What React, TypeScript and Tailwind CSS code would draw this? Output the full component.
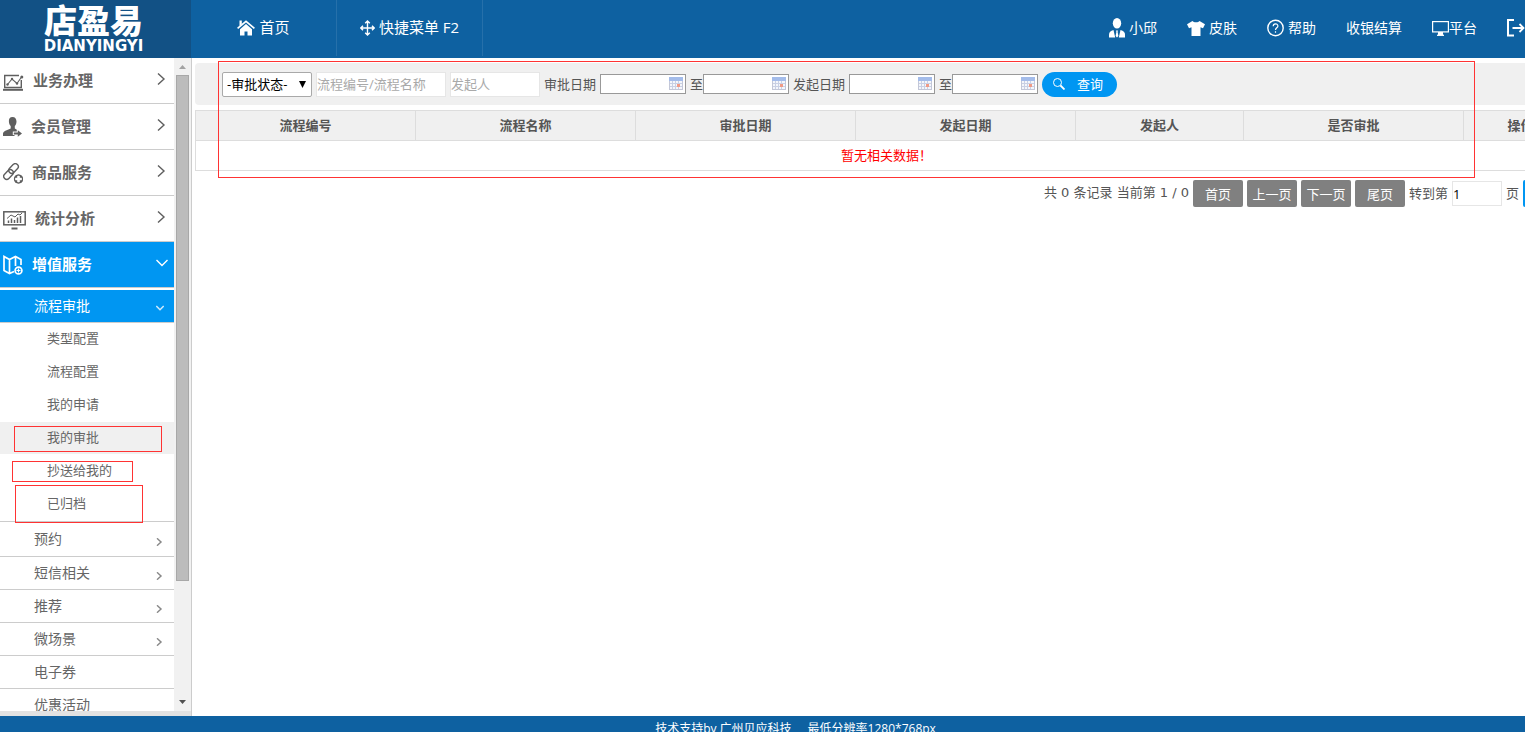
import React from 'react'

const MENUS = [
    { name: '业务办理', icon: <ChartBoardIcon /> },
    { name: '会员管理', icon: <MemberIcon /> },
    { name: '商品服务', icon: <LinkIcon /> },
    { name: '统计分析', icon: <StatsIcon /> },
]

const LEAVES = [
    { name: '类型配置' },
    { name: '流程配置' },
    { name: '我的申请' },
    { name: '我的审批', active: true, mark: 'left-[14px] top-1 w-[148px] h-[26px]' },
    { name: '抄送给我的', mark: 'left-3 top-[6px] w-[121px] h-[21px]' },
    { name: '已归档', mark: 'left-[15px] -top-[3px] w-32 h-[38px]' },
]

const SUB_MENUS = [
    { name: '短信相关', arrow: true },
    { name: '推荐', arrow: true },
    { name: '微场景', arrow: true },
    { name: '电子券', arrow: false },
    { name: '优惠活动', arrow: false },
]

const COLUMNS = [
    { name: '流程编号', width: 'w-[220px]' },
    { name: '流程名称', width: 'w-[220px]' },
    { name: '审批日期', width: 'w-[220px]' },
    { name: '发起日期', width: 'w-[220px]' },
    { name: '发起人', width: 'w-[168px]' },
    { name: '是否审批', width: 'w-[220px]' },
    { name: '操作', width: 'w-[114px]' },
]

function ChartBoardIcon() {
    return (
        <svg className="mt-1" width="21" height="17" viewBox="0 0 21 17" fill="none" stroke="#5f5f5f">
            <path d="M16 1.500H1.700V13.500H18.300V6" strokeWidth="1.400" />
            <path d="M4.500 10.500L9 5l5 4.500 4.500-6.500" strokeWidth="1.100" />
            <path d="M0 15.800h20" strokeWidth="2" />
            <g fill="#5f5f5f" stroke="none">
                <circle cx="4.500" cy="10.500" r="1.200" />
                <circle cx="9" cy="5" r="1.200" />
                <circle cx="14" cy="9.500" r="1.200" />
                <circle cx="18.800" cy="3" r="1.500" />
            </g>
        </svg>
    )
}

function MemberIcon() {
    return (
        <svg className="mt-px" width="19" height="20" viewBox="0 0 19 20" fill="#5f5f5f">
            <path d="M9.500 0C6.800 0 5.700 2 5.900 4.500c.1 2 .8 3.600 1.800 4.500v2.500C5 13 .5 13.500 0 16.500V19h11.500v-1H9.800v-3.500h4v-1.800c-.8-.4-1.500-.8-2-1.200V9c1-.9 1.600-2.500 1.700-4.500C13.400 2 12.200 0 9.500 0z" />
            <path d="M10.800 15.500h4v-2.300l4.200 3.300-4.200 3.300v-2.300h-4z" />
        </svg>
    )
}

function LinkIcon() {
    return (
        <svg className="mt-px" width="20" height="21" viewBox="0 0 20 21" fill="none" stroke="#5f5f5f" strokeWidth="1.400">
            <rect x="-5.500" y="-3" width="11" height="6" rx="3" transform="translate(10.500 5.500) rotate(-45)" />
            <rect x="-5.500" y="-3" width="11" height="6" rx="3" transform="translate(5.500 11.500) rotate(-45)" />
            <circle cx="15.500" cy="16" r="4.600" fill="#5f5f5f" stroke="none" />
            <path d="M15.500 12.500v7M12 16h7" stroke="#fff" strokeWidth="2.600" />
            <circle cx="15.500" cy="16" r="4" strokeWidth="1" />
        </svg>
    )
}

function StatsIcon() {
    return (
        <svg className="mt-1" width="23" height="19" viewBox="0 0 23 19" fill="none" stroke="#5f5f5f">
            <rect x=".8" y=".8" width="21.400" height="13" strokeWidth="1.500" />
            <path d="M4 7.500l4-3.500 4 2 3-3 2 1 2-2" />
            <path d="M5.500 12V9.500M8.500 12V7.500M11.500 12V9M14.500 12V6.500M17.500 12V5" strokeWidth="1.500" />
            <path d="M8.500 17.500h6" strokeWidth="2" />
        </svg>
    )
}

function MapIcon() {
    return (
        <svg width="20" height="20" viewBox="0 0 20 20" fill="none" stroke="#fff" strokeWidth="1.700">
            <path d="M11 16.500L6.500 18.500 1 15.500V1.500L6.500 4.500 12.500 1.500 18 4.500V10M6.500 4.500v14M12.500 1.500V11" />
            <circle cx="15.500" cy="15.500" r="3.400" />
            <path d="M15.500 13.500v4M13.500 15.500h4" strokeWidth="1.200" />
        </svg>
    )
}

function Chevron({ down = false, small = false, color = '#5f5f5f' }) {
    const size = small ? 'w-2 h-2' : 'w-3 h-3'
    return (
        <svg className={size} viewBox="0 0 12 12" fill="none" stroke={color} strokeWidth={small ? 2.2 : 1.4}>
            <path d={down ? 'M.5 3l5.500 5.500L11.500 3' : 'M3 .5L9 6l-6 5.500'} />
        </svg>
    )
}

function HomeIcon() {
    return (
        <svg width="18" height="16" viewBox="0 0 18 16" fill="#fff">
            <path d="M9 4L3 9.300V15.500h4.500v-4h3v4H15V9.300z" />
            <path d="M.6 8.300L9 1.300l8.400 7" fill="none" stroke="#fff" strokeWidth="1.700" />
            <path d="M2.500.5h2.300V4L2.500 6z" />
        </svg>
    )
}

function MoveIcon() {
    return (
        <svg width="15" height="16" viewBox="0 0 15 16" fill="none" stroke="#fff" strokeWidth="1.400">
            <path d="M7.500 1v14M.8 8h13.400M5.200 3.300l2.300-2.300 2.300 2.300M5.200 12.700l2.300 2.300 2.300-2.300M3 5.700L.8 8 3 10.300M12 5.700L14.200 8 12 10.300" />
        </svg>
    )
}

function UserIcon() {
    return (
        <svg width="16" height="20" viewBox="0 0 16 20" fill="#fff">
            <ellipse cx="8" cy="5.200" rx="4.200" ry="5.200" />
            <path d="M4.500 12C1.500 13 0 14 0 16.500v3h6.200z" />
            <path d="M11.500 12c3 1 4.500 2 4.500 4.500v3H9.800z" />
            <path d="M7 12.500h2l-.4 1.500.8 4L8 19.500 6.600 18l.8-4z" />
        </svg>
    )
}

function ShirtIcon() {
    return (
        <svg width="18" height="15" viewBox="0 0 18 15" fill="#fff">
            <path d="M5.500 0c1 1.800 6 1.800 7 0L18 3.200l-2 4-2.500-1V15h-9V6.200L2 7.200 0 3.200z" />
        </svg>
    )
}

function HelpIcon() {
    return (
        <svg width="17" height="18" viewBox="0 0 17 18" fill="none" stroke="#fff" strokeWidth="1.400">
            <circle cx="8.500" cy="9" r="7.700" />
            <path d="M6.200 7.300c0-3.200 4.700-3.200 4.700-.3 0 1.800-2.400 1.900-2.400 4M8.500 12.200v1.500" strokeWidth="1.200" />
        </svg>
    )
}

function MonitorIcon() {
    return (
        <svg width="17" height="15" viewBox="0 0 17 15" fill="none" stroke="#fff">
            <rect x=".6" y=".6" width="15.800" height="10.300" strokeWidth="1.200" />
            <path d="M8.500 11v3" strokeWidth="5" />
            <path d="M5 14.300h7" strokeWidth="1.300" />
        </svg>
    )
}

function LogoutIcon() {
    return (
        <svg width="18" height="18" viewBox="0 0 18 18" fill="none" stroke="#fff" strokeWidth="2">
            <path d="M7 1H1v15.500h6" />
            <path d="M5.500 9h11M12.500 5l4 4-4 4" strokeWidth="1.800" />
        </svg>
    )
}

function CalendarIcon() {
    return (
        <svg width="14" height="13" viewBox="0 0 14 13">
            <rect x=".5" y=".5" width="13" height="12" fill="#f4f6fb" stroke="#c3c7d8" />
            <rect width="14" height="4" fill="#a4bcea" />
            <path d="M1 6.500h12M1 9.500h12M3.500 4v8M6.500 4v8M9.500 4v8" stroke="#c9d0e4" />
            <rect x="8" y="7" width="3" height="3" fill="#f09a86" />
        </svg>
    )
}

function Divider() {
    return <span className="w-px self-stretch bg-[#2670aa]" />
}

function Header() {
    return (
        <header className="flex h-[58px] shrink-0 bg-[#0e61a1] text-sm text-white">
            <a href="#" className="flex w-[191px] shrink-0 flex-col items-center bg-[#125185] pr-1 pt-1">
                <span className="text-[33px] leading-[34px] font-black">店盈易</span>
                <span className="font-['DejaVu_Sans'] text-[15px] leading-4 font-bold">DIANYINGYI</span>
            </a>
            <nav className="flex pb-[2px] text-[15px]">
                <a href="#" className="flex w-[145px] items-center justify-center gap-1">
                    <HomeIcon />
                    首页
                </a>
                <Divider />
                <a href="#" className="flex w-[145px] items-center justify-center gap-1">
                    <MoveIcon />
                    快捷菜单 F2
                </a>
                <Divider />
            </nav>
            <nav className="ml-auto flex items-center gap-[30px] pb-[2px] whitespace-nowrap">
                <a href="#" className="flex items-center gap-1">
                    <UserIcon />
                    小邱
                </a>
                <a href="#" className="flex items-center gap-1">
                    <ShirtIcon />
                    皮肤
                </a>
                <a href="#" className="flex items-center gap-1">
                    <HelpIcon />
                    帮助
                </a>
                <a href="#">收银结算</a>
                <a href="#" className="flex items-center">
                    <MonitorIcon />
                    平台
                </a>
                <a href="#" aria-label="logout">
                    <LogoutIcon />
                </a>
            </nav>
        </header>
    )
}

function Sidebar() {
    return (
        <aside className="flex w-48 shrink-0 flex-col border-r border-[#ccc] bg-white text-[#666]">
            <div className="flex min-h-0 flex-1">
                <nav className="w-[174px] overflow-hidden">
                    {MENUS.map((menu) => (
                        <a
                            key={menu.name}
                            href="#"
                            className="flex h-[46px] items-center gap-[9px] border-b border-[#ccc] pl-[3px] pr-[7px] text-[15px] font-bold"
                        >
                            {menu.icon}
                            <span className="pb-[2px]">{menu.name}</span>
                            <span className="ml-auto pb-1">
                                <Chevron />
                            </span>
                        </a>
                    ))}
                    <a
                        href="#"
                        className="mb-[2px] flex h-[46px] items-center gap-[9px] border-b border-[#ccc] bg-[#0096f2] pl-[3px] pr-[6px] text-[15px] font-bold text-white"
                    >
                        <MapIcon />
                        <span className="pb-[2px]">增值服务</span>
                        <span className="ml-auto pb-1">
                            <Chevron down color="#fff" />
                        </span>
                    </a>
                    <a
                        href="#"
                        className="flex h-[33px] items-center justify-between border-b border-[#ccc] bg-[#0096f2] pl-[34px] pr-[10px] text-sm text-white"
                    >
                        流程审批
                        <span className="pt-1">
                            <Chevron down small color="#cfe9fc" />
                        </span>
                    </a>
                    <ul className="text-[13px]">
                        {LEAVES.map((leaf) => (
                            <li key={leaf.name} className="relative h-[33px]">
                                <a
                                    href="#"
                                    className={
                                        leaf.active
                                            ? 'block h-8 bg-[#f0f0f0] pl-[47px] leading-[30px]'
                                            : 'block h-8 pl-[47px] leading-[30px]'
                                    }
                                >
                                    {leaf.name}
                                </a>
                                {leaf.mark && <span className={`absolute border border-[#f33] ${leaf.mark}`} />}
                            </li>
                        ))}
                    </ul>
                    <a
                        href="#"
                        className="flex h-9 items-center justify-between border-y border-[#ccc] pl-[34px] pr-[11px] text-sm"
                    >
                        预约
                        <span className="pt-[6px]">
                            <Chevron small color="#888" />
                        </span>
                    </a>
                    {SUB_MENUS.map((menu) => (
                        <a
                            key={menu.name}
                            href="#"
                            className="flex h-[33px] items-center justify-between border-b border-[#ccc] pl-[34px] pr-[11px] text-sm"
                        >
                            {menu.name}
                            {menu.arrow && (
                                <span className="pt-[6px]">
                                    <Chevron small color="#888" />
                                </span>
                            )}
                        </a>
                    ))}
                </nav>
                {/* scroll bar */}
                <div className="flex w-[17px] flex-col items-center bg-[#f1f1f1]">
                    <svg className="h-[17px] w-[17px] shrink-0" viewBox="0 0 17 17" fill="#a3a3a3">
                        <path d="M5 11h7L8.500 7z" />
                    </svg>
                    <div className="min-h-0 w-[13px] flex-1">
                        <div className="h-9/11 border border-[#a8a8a8] bg-[#bcbcbc]" />
                    </div>
                    <svg className="h-[17px] w-[17px] shrink-0" viewBox="0 0 17 17" fill="#505050">
                        <path d="M5 6h7l-3.500 4z" />
                    </svg>
                </div>
            </div>
            <div className="h-[5px] bg-[#e2e2e2]" />
        </aside>
    )
}

function DateInput({ id, label }: { id: string; label: string }) {
    return (
        <span className="relative">
            <input id={id} aria-label={label} className="block h-5 w-[86px] border border-[#999] bg-white px-1" />
            <span className="pointer-events-none absolute right-[3px] top-[3px]">
                <CalendarIcon />
            </span>
        </span>
    )
}

function SearchBar() {
    return (
        <form className="flex h-[42px] items-center gap-1 rounded bg-[#f0f0f0] pl-[27px] text-[13px] whitespace-nowrap">
            <span className="relative">
                <select
                    aria-label="审批状态"
                    className="block h-[25px] w-[90px] appearance-none rounded-xs border border-[#a9a9a9] bg-white pl-1 text-[13px] text-black"
                >
                    <option>-审批状态-</option>
                </select>
                <svg className="pointer-events-none absolute right-[6px] top-[9px] h-[7px] w-[7px]" viewBox="0 0 7 7">
                    <path d="M0 0h7L3.500 7z" />
                </svg>
            </span>
            <input
                aria-label="流程编号/流程名称"
                placeholder="流程编号/流程名称"
                className="h-[25px] w-[130px] border border-[#e6e6e6] bg-white text-[13px] placeholder:text-[#a9a9a9]"
            />
            <input
                aria-label="发起人"
                placeholder="发起人"
                className="h-[25px] w-[90px] border border-[#e6e6e6] bg-white text-[13px] placeholder:text-[#a9a9a9]"
            />
            <label htmlFor="approveFrom">审批日期</label>
            <DateInput id="approveFrom" label="审批日期起" />
            <span className="flex items-center">
                <label htmlFor="approveTo">至</label>
                <DateInput id="approveTo" label="审批日期止" />
            </span>
            <label htmlFor="startFrom">发起日期</label>
            <DateInput id="startFrom" label="发起日期起" />
            <span className="flex items-center">
                <label htmlFor="startTo">至</label>
                <DateInput id="startTo" label="发起日期止" />
            </span>
            <button
                type="button"
                className="flex h-[25px] w-[75px] items-center justify-between rounded-full bg-[#0096f2] pl-[11px] pr-[14px] text-white"
            >
                <svg width="12" height="12" viewBox="0 0 12 12" fill="none" stroke="#fff">
                    <circle cx="4.500" cy="4.500" r="4" />
                    <path d="M7.500 7.500l4 4" strokeWidth="1.800" />
                </svg>
                查询
            </button>
        </form>
    )
}

function ResultTable() {
    return (
        <table className="mt-[5px] w-full table-fixed border-collapse text-center text-[13px]">
            <thead>
                <tr className="h-[30px] bg-[#f0f0f0]">
                    {COLUMNS.map((column) => (
                        <th key={column.name} className={`border border-[#ddd] p-0 pb-[2px] font-bold ${column.width}`}>
                            {column.name}
                        </th>
                    ))}
                </tr>
            </thead>
            <tbody>
                <tr className="h-[30px]">
                    <td colSpan={7} className="border border-[#ddd] p-0 pb-[2px] text-[#f00]">
                        暂无相关数据！
                    </td>
                </tr>
            </tbody>
        </table>
    )
}

function Pagination() {
    return (
        <div className="mt-[9px] flex items-center justify-end gap-1 pr-1 text-[13px] whitespace-nowrap">
            <span className="pb-[2px] font-['DejaVu_Sans','Noto_Sans_CJK_SC',sans-serif]">
                共 0 条记录 当前第 1 / 0
            </span>
            {['首页', '上一页', '下一页', '尾页'].map((name) => (
                <button key={name} type="button" className="h-[27px] w-[50px] rounded-xs bg-[#808080] text-white">
                    {name}
                </button>
            ))}
            <label htmlFor="page" className="pb-[2px]">
                转到第
            </label>
            <input
                id="page"
                defaultValue="1"
                className="h-[25px] w-[50px] border border-[#e6e6e6] bg-white text-black"
            />
            <span className="pb-[2px]">页</span>
            <button type="button" className="h-[27px] w-[50px] rounded-xs bg-[#0096f2] text-white">
                跳转
            </button>
        </div>
    )
}

export default function App() {
    return (
        <div className="flex h-screen flex-col overflow-hidden bg-white font-['Open_Sans','Noto_Sans_CJK_SC',sans-serif] leading-5">
            <Header />
            <div className="flex min-h-0 flex-1">
                <Sidebar />
                <main className="relative min-w-0 flex-1 overflow-hidden pl-[3px] pt-[5px] text-[#555]">
                    <div className="w-full min-w-[1382px]">
                        <SearchBar />
                        <ResultTable />
                        <Pagination />
                    </div>
                    <div className="pointer-events-none absolute left-[26px] right-[50px] top-[3px] h-[117px] border border-[#f33]" />
                </main>
            </div>
            <footer className="flex h-4 shrink-0 justify-center gap-4 overflow-hidden bg-[#0e61a1] pl-[66px] text-xs leading-[26px] text-white">
                <span>技术支持by 广州贝应科技</span>
                <span>最低分辨率1280*768px</span>
            </footer>
        </div>
    )
}
